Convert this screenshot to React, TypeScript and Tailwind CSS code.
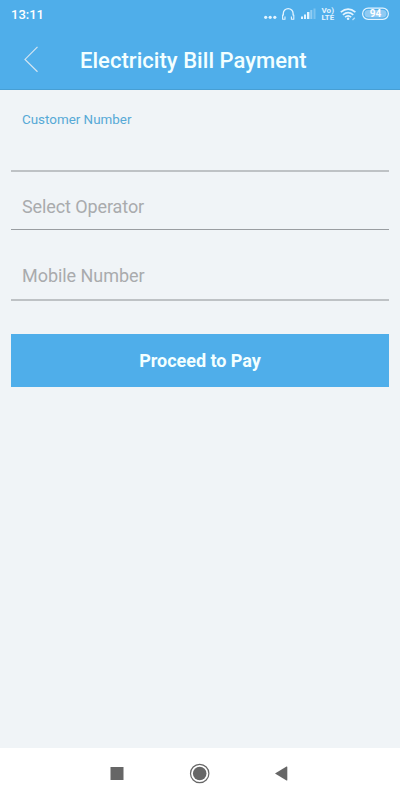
import type { ReactNode } from "react";

function StatusBar() {
  return (
    <div className="flex h-7 justify-between pl-[11px] pr-[11px] text-white">
      <span className="pt-[7px] text-[13px] leading-4 font-medium">13:11</span>
      <div className="flex">
        <svg width="126" height="28" viewBox="263 0 126 28" fill="none">
          <g fill="#e3f4ff">
            <circle cx="265.7" cy="17.3" r="1.6" />
            <circle cx="270.2" cy="17.3" r="1.6" />
            <circle cx="274.8" cy="17.3" r="1.6" />
          </g>
          {/* headset */}
          <path
            d="M283.3 15.5v-2a4.9 4.9 0 0 1 9.8 0v2"
            stroke="#e3f4ff"
            strokeWidth="1.3"
          />
          <path
            d="M283.3 15h-.7v4.2h2.4v-2.6M293.1 15h.7v4.2h-2.4v-2.6"
            stroke="#e3f4ff"
            strokeWidth="1.1"
            strokeLinejoin="round"
          />
          {/* signal */}
          <g fill="#e3f4ff">
            <rect x="301" y="16.5" width="2" height="2.5" />
            <rect x="304" y="14.5" width="2" height="4.5" />
            <rect x="307" y="12" width="2.4" height="7" />
            <rect x="310.3" y="10" width="2" height="9" fillOpacity="0.45" />
            <rect x="313.5" y="8.5" width="2" height="10.5" fillOpacity="0.3" />
          </g>
          <g fill="#e3f4ff" fontSize="7" fontWeight="700">
            <text x="321.5" y="13.2" textLength="12.5" lengthAdjust="spacingAndGlyphs">
              Vo)
            </text>
            <text x="321.5" y="19.6" textLength="12.5" lengthAdjust="spacingAndGlyphs">
              LTE
            </text>
          </g>
          {/* wifi */}
          <g stroke="#e3f4ff" strokeWidth="1.7">
            <path d="M340.8 12.2q7.3-6.2 14.6 0" />
            <path d="M342.9 14.8q5.2-4.3 10.4 0" />
            <path d="M345 17.2q3.1-2.6 6.2 0" />
          </g>
          <circle cx="348.1" cy="18.7" r="1.3" fill="#e3f4ff" />
          <path d="M352.5 20l2.3-2.3" stroke="#e3f4ff" strokeOpacity="0.7" strokeWidth="1.3" />
          {/* battery */}
          <rect x="362.6" y="8.1" width="25.8" height="11.3" rx="5.6" stroke="#e3f4ff" strokeWidth="1.2" />
          <rect x="364.5" y="10" width="22" height="7.5" rx="3.7" fill="#8fcaf3" />
          <text x="375.4" y="17.4" fill="#ffffff" fontSize="10" fontWeight="700" textAnchor="middle">
            94
          </text>
        </svg>
      </div>
    </div>
  );
}

function Field({ className, children }: { className: string; children: ReactNode }) {
  return <div className={`flex items-start px-[11px] ${className}`}>{children}</div>;
}

export default function App() {
  return (
    <div className="flex h-[800px] w-[400px] flex-col bg-[#f0f4f7] font-['Roboto',sans-serif]">
      <header className="h-[90px] border-b border-[#479fd4] bg-[#4faeea]">
        <StatusBar />
        <div className="flex h-[61px] items-center pl-6">
          <svg width="15" height="27" viewBox="0 0 15 27" fill="none" className="mt-px">
            <path d="M13.5 0.8L1 13.4l12.5 12.4" stroke="#d2e5f2" strokeWidth="1.2" />
          </svg>
          <h1 className="ml-[41px] mt-[5px] text-[22px] leading-7 font-medium tracking-[0.04px] text-[#f3ffff]">
            Electricity Bill Payment
          </h1>
        </div>
      </header>

      <main className="flex flex-1 flex-col px-[11px]">
        <Field className="h-[82px] border-b-2 border-[#bec2c5] pt-[21px]">
          <label className="text-[13.4px] leading-[18px] text-[#56a9d6]">
            Customer Number
          </label>
        </Field>
        <Field className="h-[58px] border-b border-[#999da1] pt-[23px]">
          <span className="text-lg leading-6 tracking-[-0.1px] text-[#a9abad]">
            Select Operator
          </span>
        </Field>
        <Field className="h-[71px] border-b-2 border-[#bec2c5] pt-[34px]">
          <span className="text-lg leading-6 tracking-[-0.05px] text-[#a9abad]">
            Mobile Number
          </span>
        </Field>
        <button className="mt-[33px] h-[53px] bg-[#4faeea] pt-px text-lg font-bold tracking-[-0.04px] text-[#f3ffff]">
          Proceed to Pay
        </button>
      </main>

      <nav className="h-[52px] bg-white">
        <svg width="400" height="52" viewBox="0 748 400 52" fill="#666666">
          <rect x="110.5" y="767" width="13" height="13" />
          <circle cx="199.7" cy="773.5" r="9.2" fill="none" stroke="#666666" strokeWidth="1.2" />
          <circle cx="199.7" cy="773.5" r="6.8" />
          <path d="M275 773.5L286.5 766.5Q287.3 766.2 287.3 767V780Q287.3 780.8 286.5 780.5Z" />
        </svg>
      </nav>
    </div>
  );
}
